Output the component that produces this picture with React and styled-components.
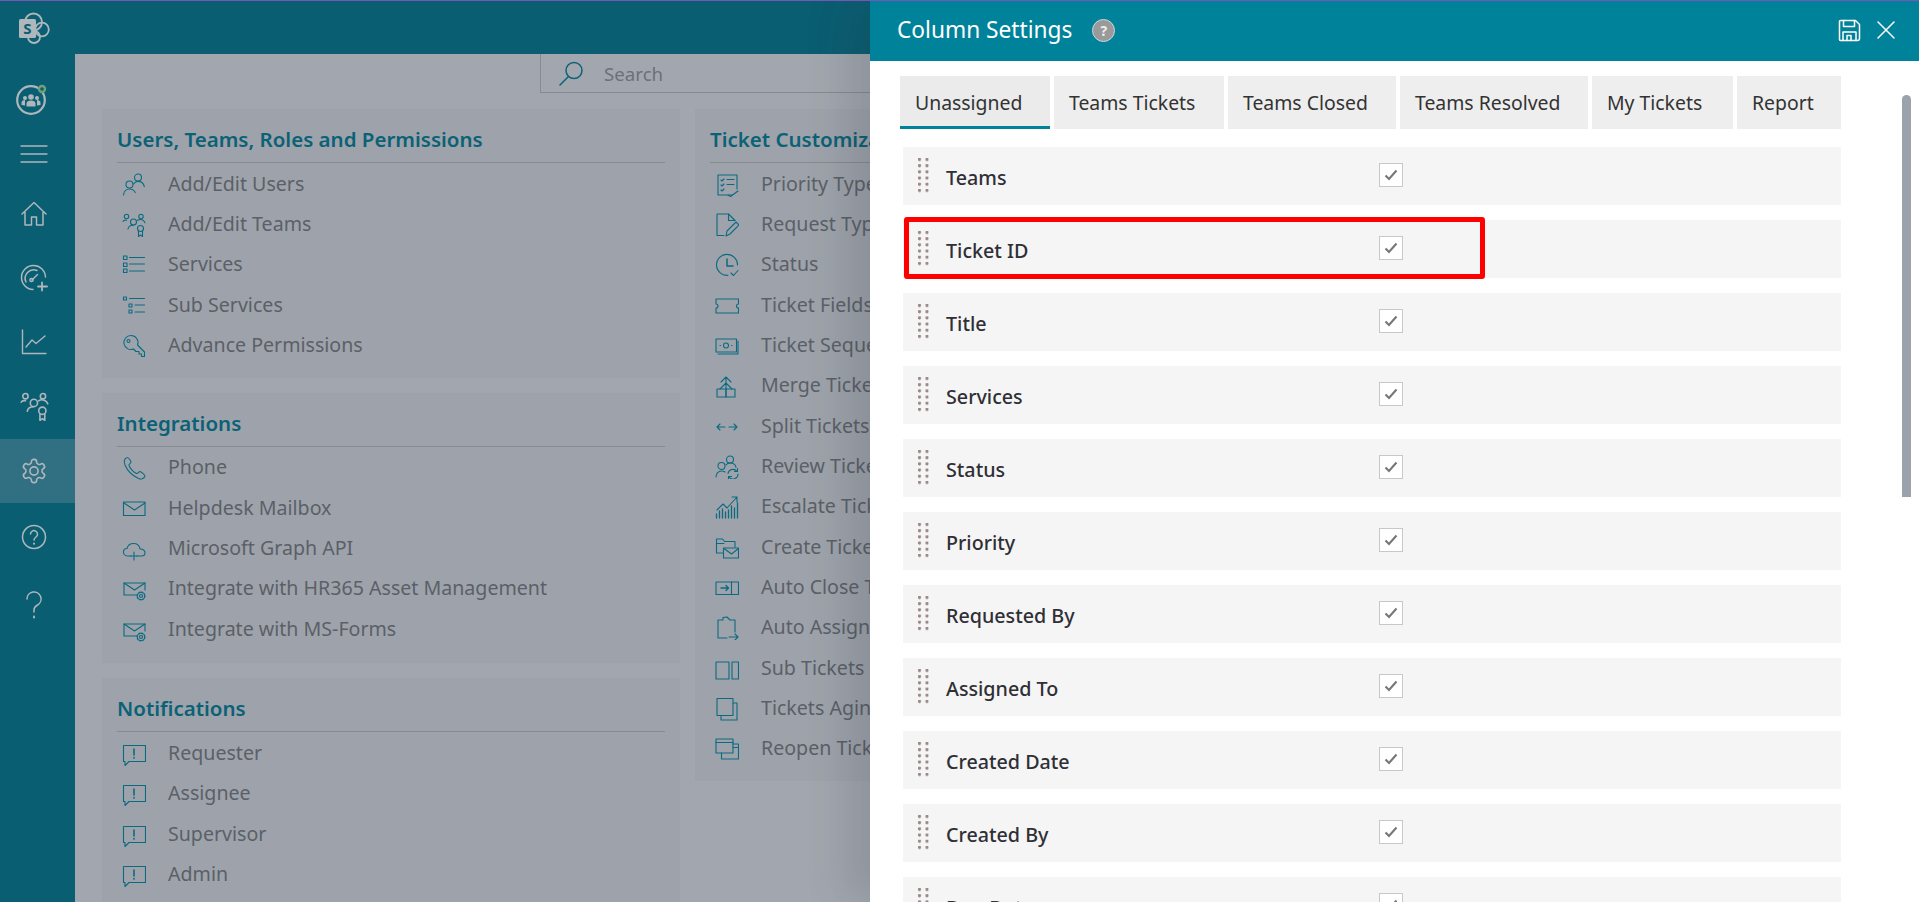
import React from "react";
import styled, { createGlobalStyle } from "styled-components";

const Global = createGlobalStyle`
  html, body { margin: 0; padding: 0; height: 902px; overflow: hidden; background: #a2a7af; }
  * { box-sizing: border-box; }
  #root { height: 902px; overflow: hidden; }
  body { font-family: "Noto Sans", "Open Sans", sans-serif; }
`;

const Shell = styled.div`
  display: flex;
  height: 902px;
  border-top: 1px solid #7a55b8;
  overflow: hidden;
  position: relative;
`;
const Rail = styled.nav`
  width: 75px;
  flex: none;
  background: #0a5e72;
  color: #aeb7bc;
  display: flex;
  flex-direction: column;
`;
const RailItem = styled.div`
  height: ${p => p.$h}px;
  padding-top: ${p => p.$pt || 0}px;
  padding-right: ${p => (p.$pr === undefined ? 7 : p.$pr)}px;
  display: flex;
  align-items: center;
  justify-content: center;
  background: ${p => (p.$active ? "#316f82" : "transparent")};
  flex: none;
`;
const Main = styled.div`
  flex: 1;
  min-width: 0;
  display: flex;
  flex-direction: column;
`;
const TopBar = styled.header`
  height: 53px;
  flex: none;
  background: #0a5e72;
`;
const Content = styled.main`
  flex: 1;
  background: #a2a7af;
  overflow: hidden;
`;
const SearchBox = styled.div`
  margin-left: 465px;
  width: 820px;
  height: 39px;
  border-left: 1px solid #868b93;
  border-bottom: 1px solid #868b93;
  display: flex;
  align-items: center;
  padding-left: 18px;
  gap: 20px;
  color: #0c6277;
`;
const SearchText = styled.span`
  font-size: 18.7px;
  color: #6c7178;
`;
const Columns = styled.div`
  margin: 16px 0 0 27px;
  display: grid;
  grid-template-columns: 578px 578px;
  column-gap: 15px;
  align-items: start;
`;
const Stack = styled.div`
  display: flex;
  flex-direction: column;
  gap: 15px;
`;
const Card = styled.section`
  background: #9ea3ab;
  padding: 0 15px ${p => p.$pb || 13}px;
`;
const CardTitle = styled.h2`
  margin: 0;
  height: 54px;
  border-bottom: 1px solid #868b93;
  font-size: 20.5px;
  line-height: 61px;
  font-weight: 600;
  color: #0b6176;
  letter-spacing: 0;
  white-space: nowrap;
`;
const Item = styled.div`
  height: 40.33px;
  display: flex;
  align-items: center;
  padding-left: 5px;
  color: #0c6a80;
`;
const ItemIcon = styled.span`
  width: 24px;
  height: 24px;
  margin-right: 22px;
  flex: none;
  display: flex;
  margin-top: 3px;
`;
const ItemText = styled.span`
  font-size: 19.6px;
  color: #5b6067;
  white-space: nowrap;
`;
const Panel = styled.aside`
  position: absolute;
  top: 0;
  right: 0;
  bottom: 0;
  width: 1049px;
  background: #fff;
  box-shadow: -22px 0 40px rgba(40, 45, 55, 0.16);
  overflow: hidden;
`;
const PanelHead = styled.div`
  height: 60px;
  background: #00829a;
  color: #fff;
  display: flex;
  align-items: center;
  padding: 0 22px 2px 27px;
`;
const PanelTitle = styled.h1`
  margin: 0 20px 0 0;
  font-size: 22.7px;
  font-weight: 400;
  line-height: 1;
`;
const HelpDot = styled.span`
  width: 23px;
  height: 23px;
  border-radius: 50%;
  background: #9a9a9a;
  border: 1px solid #cfd6d8;
  color: #eee;
  font-size: 14px;
  font-weight: 700;
  display: flex;
  align-items: center;
  justify-content: center;
`;
const HeadActions = styled.div`
  margin-left: auto;
  display: flex;
  align-items: center;
  gap: 14px;
`;
const PanelBody = styled.div`
  padding: 15px 0 0 30px;
`;
const Tabs = styled.div`
  display: flex;
  gap: 4px;
  height: 53px;
`;
const Tab = styled.div`
  width: ${p => p.$w}px;
  flex: none;
  height: 53px;
  padding: 3px 0 0 15px;
  display: flex;
  align-items: center;
  font-size: 19.4px;
  color: #333;
  white-space: nowrap;
  background: ${p => (p.$active ? "#ebebeb" : "#eeeeee")};
  border-bottom: 3px solid ${p => (p.$active ? "#00829a" : "transparent")};
`;
const Rows = styled.div`
  margin: 18px 0 0 3px;
  width: 938px;
  display: flex;
  flex-direction: column;
  gap: 15px;
`;
const Row = styled.div`
  position: relative;
  height: 58px;
  flex: none;
  background: #f5f5f5;
  display: grid;
  grid-template-columns: 476px 24px;
  align-items: center;
`;
const Grip = styled.span`
  position: absolute;
  left: 15px;
  top: 11px;
  width: 11px;
  height: 35px;
  background-image: radial-gradient(circle at 1.5px 1.5px, #9b8888 1.4px, transparent 1.9px);
  background-size: 7.5px 6.2px;
`;
const RowLabel = styled.span`
  padding-left: 43px;
  font-size: 19.7px;
  font-weight: 500;
  color: #2f2f35;
  margin-top: 2px;
`;
const Check = styled.span`
  width: 24px;
  height: 24px;
  margin-top: -5px;
  transform: translateY(1px);
  border: 1px solid #c8c8c8;
  background: #fff;
  display: flex;
  align-items: center;
  justify-content: center;
`;
const Highlight = styled.div`
  position: absolute;
  left: 1px;
  top: -3px;
  width: 581px;
  height: 62px;
  border: 5px solid #ff0000;
  border-radius: 3px;
  pointer-events: none;
`;
const Scroll = styled.div`
  position: absolute;
  left: 1032px;
  top: 94px;
  width: 9px;
  height: 402px;
  border-radius: 5px 5px 0 0;
  background: #9aa3ab;
`;

const Svg = ({ size = 24, sw = 1.1, children, vb = "0 0 24 24" }) => (
  <svg width={size} height={size} viewBox={vb} fill="none" stroke="currentColor" strokeWidth={sw} strokeLinecap="round" strokeLinejoin="round">
    {children}
  </svg>
);

const MailGear = (
  <>
    <path d="M15 18H2V6h21v7" />
    <path d="M2 6l10.500 7L23 6" />
    <circle cx="19" cy="19" r="1.500" strokeWidth="1.200" />
    <circle cx="19" cy="19" r="3.800" strokeDasharray="1.600 1.400" strokeWidth="1.400" />
  </>
);
const Chat = (
  <>
    <path d="M1.500 3.500h22v16H7L3 23.500v-4H1.500z" />
    <path d="M12 7v6" strokeWidth="1.600" />
    <path d="M12 15.500v.6" strokeWidth="1.600" />
  </>
);
const I = {
  users: (<><circle cx="16" cy="4.500" r="3.500" /><circle cx="7.500" cy="11.500" r="3.500" /><path d="M1.500 22c.3-3.500 2.800-6 6-6s4.800 1.600 5.800 3.600" /><path d="M11.500 11c1-1.300 2.700-2.600 4.500-2.600 3.300 0 5.700 2 6.300 5.300" /></>),
  team: (<><circle cx="4.500" cy="3.500" r="2.200" /><circle cx="19" cy="3.500" r="2.200" /><circle cx="11.500" cy="9" r="3" /><path d="M1 8.500c.5-1 2-1.600 3.500-1.200" /><path d="M6 16c.3-2.500 2.500-3.800 5.500-3.800" /><path d="M15.500 7.300c1-.8 3-1 4.500-.5 1.500.5 2.500 1.500 3 3" /><circle cx="18.500" cy="15.500" r="3" /><path d="M16.500 18v5.500l2-1.500 2 1.500V18" /></>),
  list: (<><rect x="1.500" y="3" width="3.500" height="3.500" /><rect x="1.500" y="10" width="3.500" height="3.500" /><rect x="1.500" y="16" width="3.500" height="3.500" /><path d="M7.500 4.500h15M7.500 11h15M7.500 18h15" /></>),
  sub: (<><rect x="1.500" y="3" width="3" height="3" /><rect x="7" y="10" width="3" height="3" /><rect x="7" y="16" width="3" height="3" /><path d="M7.500 4.500h15M13 11h9.500M13 18h9.500" /></>),
  key: (<><path d="M9 1.500a7 7 0 0 1 6.500 9.500l7 7v4.500h-3v-2.500h-2.500v-2.500h-3l-2.500-2.500A7 7 0 1 1 9 1.500z" /><circle cx="6.500" cy="7" r="1.500" /></>),
  phone: (<path d="M5 1.500C2.500 2.500 1.500 5 3 9c2.500 6 7 10.500 13.500 13.500 2.500 1 5.500.5 6.500-2.500.3-1-3.500-4-5-4.500-1.500 0-2 2.500-3.500 2-3-1.200-6.500-5-7.500-8-.5-1.500 2-2 2-3.500C9 4.500 6 1 5 1.500z" />),
  mail: (<><rect x="1.500" y="5" width="21.500" height="13.500" /><path d="M2 6l10.500 7L23 6" /></>),
  cloud: (<><path d="M9 19H5.500C3 19 1.500 17 1.500 15c0-2 1.500-3.500 3.500-3.500C5.800 8.500 8.500 6.500 11.500 6.500c3.500 0 6 2.500 6.500 5.500 3-.2 5 1.500 5 3.700 0 2-1.500 3.300-3.500 3.300H15" /><path d="M12 15v8M8.500 19h7" /></>),
  mailgear: MailGear,
  chat: Chat,
  prio: (<><path d="M17 22H3V2h19v14" /><path d="M6 7l1 1 2-2M6 12l1 1 2-2M6 17l1 1 2-2M12 6.500h7M12 11.500h7M13 22l2.500 1.500L23 18" /></>),
  req: (<><path d="M9 22.500H2V1h11.500L20 7.500" /><path d="M13.500 1v6.500H20" /><path d="M11 23l1-5 9-9 3 3-9 9z" /></>),
  status: (<><path d="M13 22.300A10.500 10.500 0 1 1 22.500 12" /><path d="M12 6v7h6" strokeWidth="1.500" /><path d="M16 20l2.500 2.500 4.500-5" /></>),
  ticket: (<path d="M1 5h22.500v5a2 2 0 0 0 0 4v5H1v-5a2 2 0 0 0 0-4z" />),
  seq: (<><rect x="1" y="5" width="20.500" height="13" /><path d="M23 7v13H3" /><circle cx="11" cy="11.500" r="2.500" /><path d="M5 11.500h.5M16.500 11.500h.5" /></>),
  merge: (<><rect x="2" y="15" width="9" height="8" /><rect x="11" y="15" width="9" height="8" /><path d="M11 15V3M6 8l5-5 5 5M5 15l6-6 6 6" /></>),
  split: (<path d="M2 12h8M2 12l3-3M2 12l3 3M14 12h8M22 12l-3-3M22 12l-3 3" />),
  review: (<><circle cx="15" cy="4.500" r="3.500" /><circle cx="6.500" cy="11" r="3.500" /><path d="M1 22c0-3.500 2.500-6 5.500-6 1.500 0 2.500.3 3.500 1M11 10c1-1.500 2.500-2 4-2 3 0 5.500 1.500 6 4.500" /><path d="M13 18.500a5 5 0 0 1 9-2M23 19a5 5 0 0 1-9 3" /><path d="M22.500 13.500v3h-3M13.500 24v-2.500h3" /></>),
  esc: (<><path d="M1.500 23v-4M4.500 23v-7M7.500 23v-9M10.500 23v-6M13.500 23v-8M16.500 23V11M19.500 23V13M22.500 23V8" strokeWidth="1.300" /><path d="M2 15l6-6 4 4L22 2M17 2h5v5" /></>),
  create: (<><path d="M7.500 17H1.500V3h6l2 2.500H20V11" /><path d="M1.500 7.500H9" /><rect x="8.500" y="12" width="15" height="10" /><path d="M9 12.500l7.500 5.500 7-5.500" /></>),
  close: (<><rect x="1" y="6" width="22.500" height="12.500" /><path d="M16.500 6v12.500" /><path d="M6 12h7.500M11 9.500l2.500 2.500-2.500 2.500" strokeWidth="1.400" /></>),
  assign: (<><path d="M12 22H3V4h5V1.500l4-.5 3 3h5v12" /><path d="M14 21h9M20 18l3 3-3 3" /></>),
  subt: (<><rect x="1" y="5" width="13" height="17" /><rect x="17" y="5" width="6.500" height="17" /></>),
  aging: (<><rect x="2" y="1.500" width="16" height="17" /><path d="M18 6h4v17H6v-4.500" /></>),
  reopen: (<><rect x="1" y="2" width="17" height="14" /><path d="M1 5.500h17" /><path d="M18 7h5.500v15H6.500v-6" /><path d="M18 10.500h5.500" /></>),
};

const Logo = () => (
  <svg width="32" height="32" viewBox="0 0 32 32" fill="none">
    <circle cx="15.500" cy="10" r="8.500" stroke="#aeb7bc" strokeWidth="1.800" />
    <circle cx="24" cy="17.500" r="6.800" stroke="#aeb7bc" strokeWidth="1.800" />
    <circle cx="16" cy="25" r="6" stroke="#aeb7bc" strokeWidth="1.800" />
    <rect x="1" y="7" width="17" height="19" rx="1.500" fill="#aeb7bc" />
    <text x="9.500" y="22" textAnchor="middle" fontFamily="Noto Sans, sans-serif" fontWeight="700" fontSize="15" fill="#0a5e72">S</text>
  </svg>
);
const Avatar = () => (
  <svg width="32" height="32" viewBox="0 0 32 32" fill="none">
    <circle cx="15" cy="16" r="13.800" stroke="#aeb7bc" strokeWidth="2.200" />
    <g fill="#aeb7bc">
      <circle cx="15" cy="13" r="2.800" /><circle cx="9" cy="14" r="2" /><circle cx="21" cy="14" r="2" />
      <path d="M10.500 22.500v-3c0-2 2-3 4.500-3s4.500 1 4.500 3v3z" />
      <path d="M5.500 21v-2.500c0-1.500 1.500-2.500 3.500-2.500v5.500zM24.500 21v-2.500c0-1.500-1.500-2.500-3.500-2.500v5.500z" />
    </g>
    <circle cx="26" cy="5" r="3" fill="#0a5e72" stroke="#6fa07a" strokeWidth="2.400" />
  </svg>
);
const Gauge = () => (
  <Svg size={28} sw={1.500} vb="0 0 28 28">
    <path d="M13 25.500A12 12 0 1 1 25.500 13" />
    <path d="M6 18a8.500 8.500 0 0 1 11-11.500" />
    <path d="M12 16l5.500-5.500" />
    <circle cx="11.500" cy="16" r="1.600" />
    <path d="M22 18.500v8M18 22.500h9" strokeWidth="1.800" />
  </Svg>
);
const Gear = () => (
  <Svg size={28} sw={1.400} vb="0 0 24 24">
    <path d="M12.220 2h-.44a2 2 0 0 0-2 2v.18a2 2 0 0 1-1 1.730l-.43.250a2 2 0 0 1-2 0l-.15-.080a2 2 0 0 0-2.730.730l-.22.380a2 2 0 0 0 .73 2.730l.15.100a2 2 0 0 1 1 1.720v.510a2 2 0 0 1-1 1.740l-.15.090a2 2 0 0 0-.73 2.730l.22.380a2 2 0 0 0 2.730.730l.15-.080a2 2 0 0 1 2 0l.43.250a2 2 0 0 1 1 1.730V20a2 2 0 0 0 2 2h.44a2 2 0 0 0 2-2v-.18a2 2 0 0 1 1-1.730l.43-.250a2 2 0 0 1 2 0l.15.080a2 2 0 0 0 2.730-.730l.22-.390a2 2 0 0 0-.73-2.730l-.15-.080a2 2 0 0 1-1-1.740v-.500a2 2 0 0 1 1-1.740l.15-.090a2 2 0 0 0 .73-2.730l-.22-.380a2 2 0 0 0-2.730-.730l-.15.080a2 2 0 0 1-2 0l-.43-.250a2 2 0 0 1-1-1.730V4a2 2 0 0 0-2-2z" />
    <circle cx="12" cy="12" r="3.500" />
  </Svg>
);
const Help = () => (
  <Svg size={26} sw={1.500} vb="0 0 26 26">
    <circle cx="13" cy="13" r="11.500" />
    <path d="M9.500 10a3.500 3.500 0 1 1 5.500 3c-1.300.9-2 1.500-2 3" />
    <path d="M13 19.500v.3" strokeWidth="2" />
  </Svg>
);
const Mark = () => (
  <Svg size={28} sw={1.500} vb="0 0 28 28">
    <path d="M7 8a7 7 0 1 1 10.500 6c-2 1.200-3.500 2.500-3.500 5v2" />
    <path d="M14 25.500v1" strokeWidth="2" />
  </Svg>
);

const cards1 = [
  { title: "Users, Teams, Roles and Permissions", items: [["users", "Add/Edit Users"], ["team", "Add/Edit Teams"], ["list", "Services"], ["sub", "Sub Services"], ["key", "Advance Permissions"]] },
  { title: "Integrations", pb: 15, items: [["phone", "Phone"], ["mail", "Helpdesk Mailbox"], ["cloud", "Microsoft Graph API"], ["mailgear", "Integrate with HR365 Asset Management"], ["mailgear", "Integrate with MS-Forms"]] },
  { title: "Notifications", items: [["chat", "Requester"], ["chat", "Assignee"], ["chat", "Supervisor"], ["chat", "Admin"]] },
];
const card2 = {
  title: "Ticket Customization",
  items: [["prio", "Priority Types"], ["req", "Request Types"], ["status", "Status"], ["ticket", "Ticket Fields"], ["seq", "Ticket Sequence"], ["merge", "Merge Tickets"], ["split", "Split Tickets"], ["review", "Review Tickets"], ["esc", "Escalate Tickets"], ["create", "Create Tickets"], ["close", "Auto Close Tickets"], ["assign", "Auto Assign Tickets"], ["subt", "Sub Tickets"], ["aging", "Tickets Aging"], ["reopen", "Reopen Tickets"]],
};
const tabs = [["Unassigned", 150], ["Teams Tickets", 170], ["Teams Closed", 168], ["Teams Resolved", 188], ["My Tickets", 141], ["Report", 104]];
const rows = ["Teams", "Ticket ID", "Title", "Services", "Status", "Priority", "Requested By", "Assigned To", "Created Date", "Created By", "Due Date"];

const SettingsCard = ({ title, items, pb }) => (
  <Card $pb={pb}>
    <CardTitle>{title}</CardTitle>
    {items.map(([icon, label]) => (
      <Item key={label}>
        <ItemIcon><Svg>{I[icon]}</Svg></ItemIcon>
        <ItemText>{label}</ItemText>
      </Item>
    ))}
  </Card>
);

export default function App() {
  return (
    <Shell>
      <Global />
      <Rail>
        <RailItem $h={53} $pr={8}><Logo /></RailItem>
        <RailItem $h={72} $pt={19} $pr={11}><Avatar /></RailItem>
        <RailItem $h={55.500}>
          <Svg size={28} sw={1.300} vb="0 0 28 28"><path d="M1 6h26M1 14h26M1 22h26" /></Svg>
        </RailItem>
        <RailItem $h={64.400}>
          <Svg size={26} sw={1.500} vb="0 0 26 26"><path d="M1 13L13 1.500 25 13M4 11v13h6.500v-8h5v8H22V11" /></Svg>
        </RailItem>
        <RailItem $h={64.400}><Gauge /></RailItem>
        <RailItem $h={64.400}>
          <Svg size={26} sw={1.400} vb="0 0 26 26"><path d="M1.500 1v23.500H25M5 18l6-7 4 3.500L24 7" /></Svg>
        </RailItem>
        <RailItem $h={64.400}>
          <Svg size={29} sw={1.300} vb="0 0 24 24">{I.team}</Svg>
        </RailItem>
        <RailItem $h={64.400} $active><Gear /></RailItem>
        <RailItem $h={68}><Help /></RailItem>
        <RailItem $h={67}><Mark /></RailItem>
      </Rail>
      <Main>
        <TopBar />
        <Content>
          <SearchBox>
            <Svg size={25} sw={1.500} vb="0 0 25 25"><circle cx="15" cy="9.500" r="8" /><path d="M9.500 15.500L1 24" /></Svg>
            <SearchText>Search</SearchText>
          </SearchBox>
          <Columns>
            <Stack>
              {cards1.map(c => <SettingsCard key={c.title} {...c} />)}
            </Stack>
            <Stack>
              <SettingsCard {...card2} />
            </Stack>
          </Columns>
        </Content>
      </Main>
      <Panel>
        <PanelHead>
          <PanelTitle>Column Settings</PanelTitle>
          <HelpDot>?</HelpDot>
          <HeadActions>
            <Svg size={23} sw={1.500} vb="0 0 23 23">
              <path d="M2.500 1.500h15l4 4v14a2 2 0 0 1-2 2h-17a1 1 0 0 1-1-1v-18a1 1 0 0 1 1-1z" />
              <path d="M5.500 1.500v6h11v-6M5 21.500V13h13v8.500M9 21.500V16.500h4v5" />
            </Svg>
            <Svg size={22} sw={1.500} vb="0 0 22 22"><path d="M3 3l16 16M19 3L3 19" /></Svg>
          </HeadActions>
        </PanelHead>
        <PanelBody>
          <Tabs>
            {tabs.map(([t, w], i) => <Tab key={t} $w={w} $active={i === 0}>{t}</Tab>)}
          </Tabs>
          <Rows>
            {rows.map(r => (
              <Row key={r}>
                <Grip />
                <RowLabel>{r}</RowLabel>
                <Check>
                  <svg width="14" height="12" viewBox="0 0 14 12" fill="none" stroke="#777" strokeWidth="2.100"><path d="M1.500 6.500l3.500 3.500 7.500-8.500" /></svg>
                </Check>
                {r === "Ticket ID" && <Highlight />}
              </Row>
            ))}
          </Rows>
        </PanelBody>
        <Scroll />
      </Panel>
    </Shell>
  );
}
